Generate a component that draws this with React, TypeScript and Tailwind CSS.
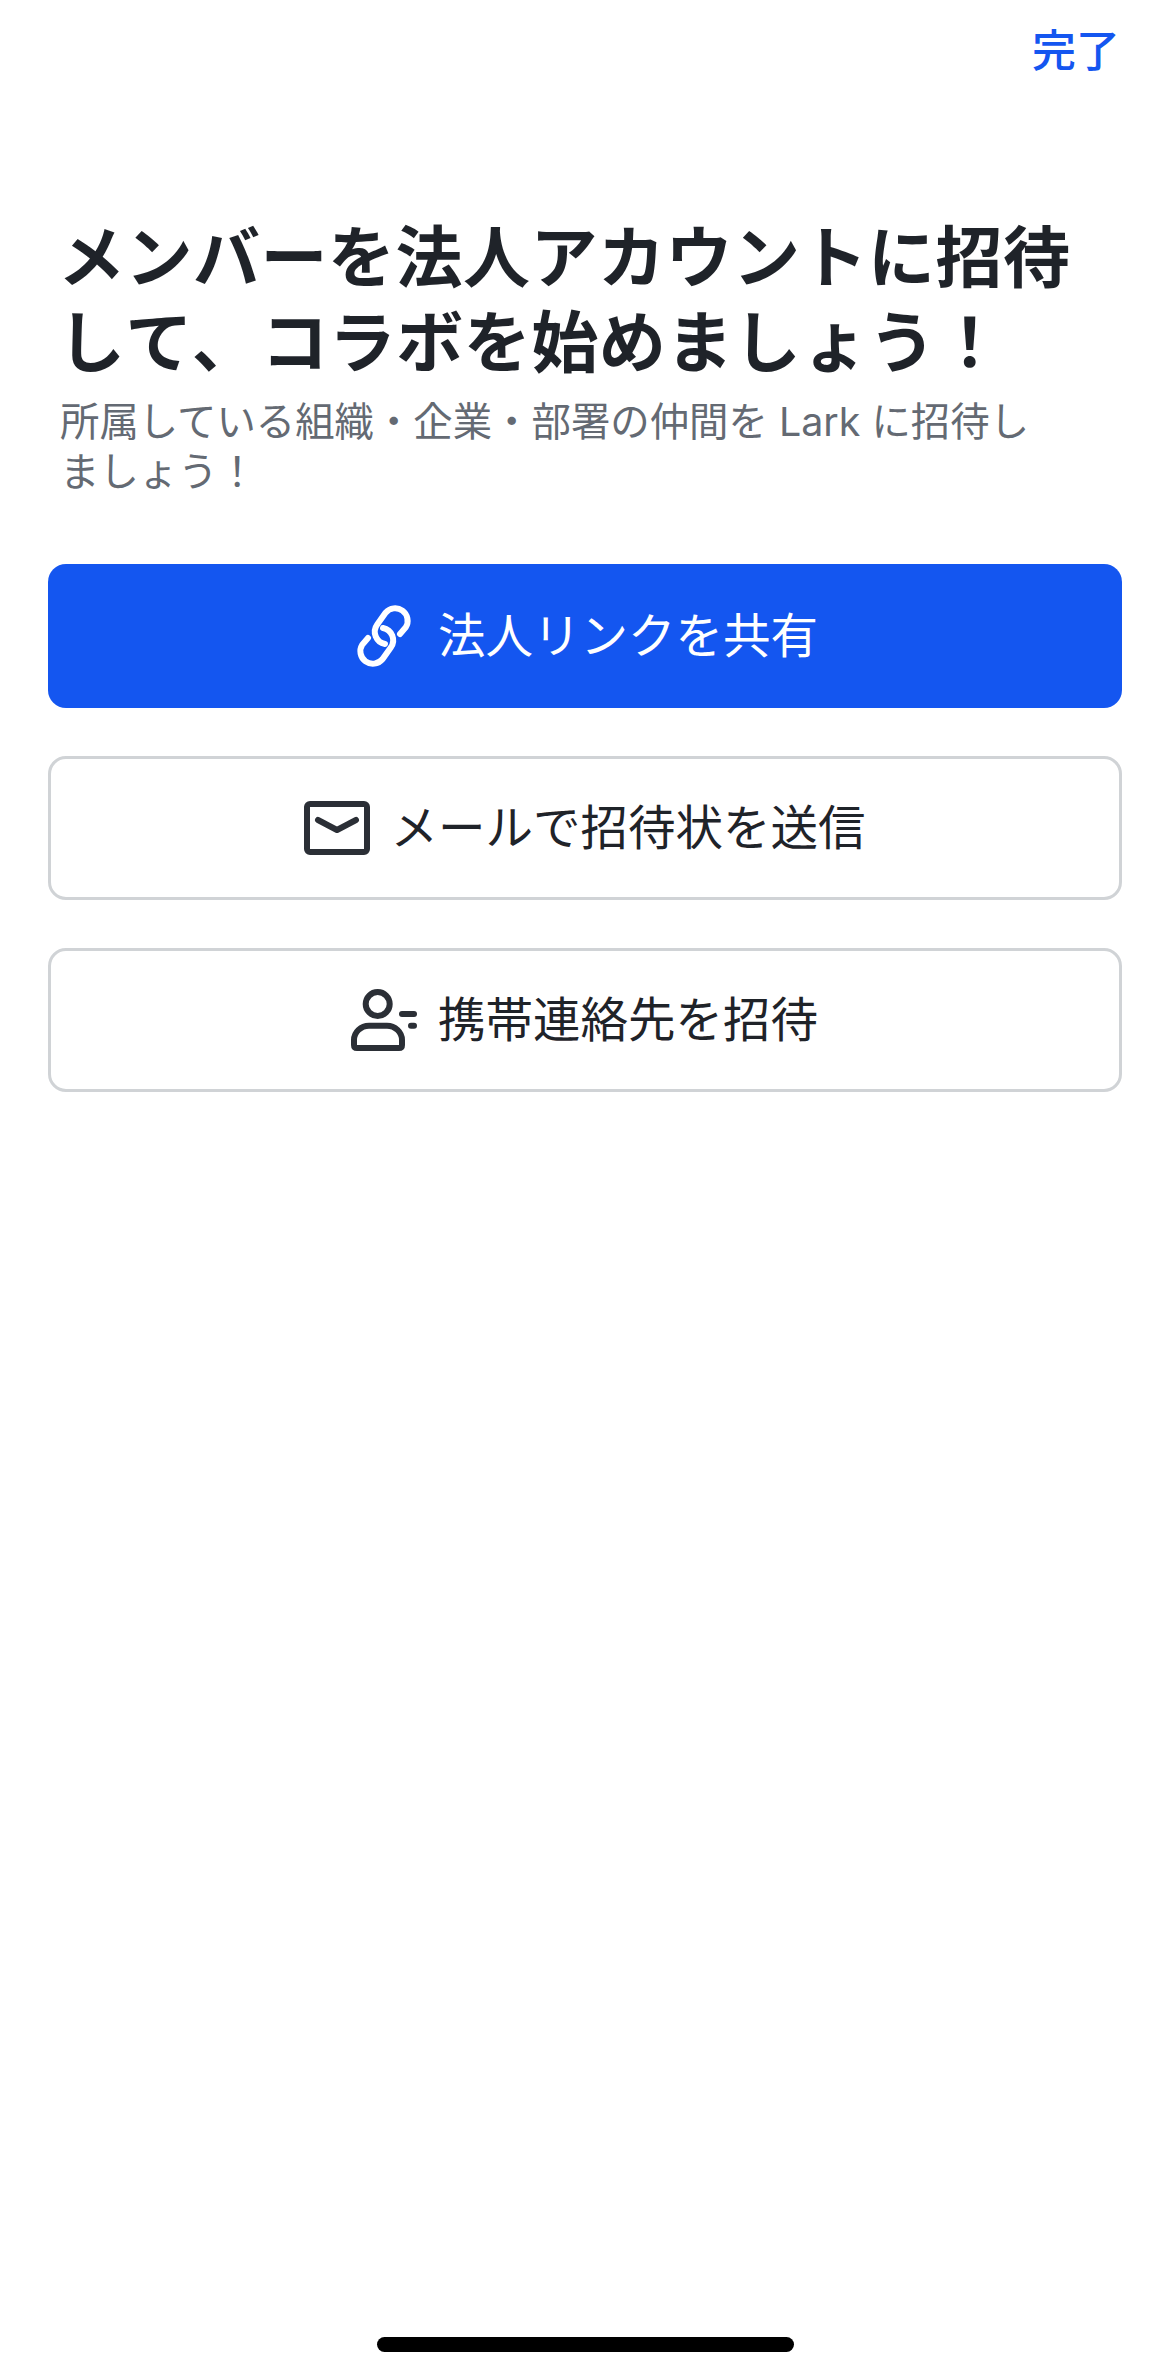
import React from "react";

const LinkIcon = () => (
  <svg width="72" height="72" viewBox="0 0 72 72" fill="none" stroke="#fff" strokeWidth="6" strokeLinecap="round" className="shrink-0">
    <g transform="translate(9 5)">
      <path d="M43 29 L48.8 22.3 A12.5 12.5 0 0 0 28.6 7.7 L20.2 19.4 A12.5 12.5 0 0 0 28 39" />
      <path d="M11 33 L5.2 39.7 A12.5 12.5 0 0 0 25.4 54.3 L33.8 42.6 A12.5 12.5 0 0 0 26 23" />
    </g>
  </svg>
);

const MailIcon = () => (
  <svg width="72" height="72" viewBox="0 0 72 72" fill="none" stroke="#2b2f36" strokeWidth="6" strokeLinecap="round" strokeLinejoin="round" className="shrink-0">
    <g transform="translate(3 9)">
      <rect x="3" y="3" width="60" height="48" rx="3" />
      <path d="M14 19 L33 29 L52 19" />
    </g>
  </svg>
);

const ContactIcon = () => (
  <svg width="72" height="72" viewBox="0 0 72 72" fill="none" stroke="#2b2f36" strokeWidth="6" strokeLinecap="round" strokeLinejoin="round" className="shrink-0">
    <g transform="translate(3 6)">
      <circle cx="26.7" cy="14" r="12" />
      <path d="M3 55 V50 C3 42 10 35.7 18 35.7 H36 C44 35.7 51 42 51 50 V55 C51 57 50 58 48 58 H6 C4 58 3 57 3 55 Z" />
      <path d="M51 24 H63" />
      <path d="M60 35.7 H63" />
    </g>
  </svg>
);

const actions = [
  { label: "法人リンクを共有", icon: <LinkIcon />, primary: true },
  { label: "メールで招待状を送信", icon: <MailIcon />, primary: false },
  { label: "携帯連絡先を招待", icon: <ContactIcon />, primary: false },
];

export default function App() {
  return (
    <div className="h-[2376px] flex flex-col bg-white font-['Inter','Noto_Sans_CJK_JP',sans-serif]">
      <header className="flex justify-end pt-[26px] pr-[50px]">
        <button className="text-[44px] leading-[50px] font-medium text-[#1456f0]">完了</button>
      </header>

      <main className="px-[48px] pt-[139px]">
        <h1 className="px-[10px] text-[67px] leading-[85px] font-bold text-[#1f2329] tracking-[0.5px]">
          メンバーを法人アカウントに招待
          <br />
          <span className="tracking-[2.5px]">して、</span>コラボを始めましょう！
        </h1>
        <p className="px-[12px] text-[39.4px] leading-[50px] text-[#646a73] mt-[12px]">
          所属している組織・企業・部署の仲間を Lark に招待し
          <br />
          ましょう！
        </p>

        <div className="flex flex-col gap-[48px] mt-[67px]">
          {actions.map((a) => (
            <button
              key={a.label}
              className={
                a.primary
                  ? "h-[144px] pr-[4px] rounded-[18px] bg-[#1456f0] text-white text-[47.5px] flex items-center justify-center gap-[18px]"
                  : "h-[144px] pr-[4px] rounded-[18px] border-[3px] border-[#d0d3d6] text-[#1f2329] text-[47.5px] flex items-center justify-center gap-[18px]"
              }
            >
              {a.icon}
              <span>{a.label}</span>
            </button>
          ))}
        </div>
      </main>

      <div className="mt-auto mb-[24px] mx-auto w-[417px] h-[15px] rounded-full bg-black" />
    </div>
  );
}
